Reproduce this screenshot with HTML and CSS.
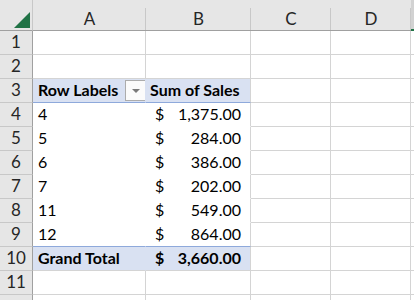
FILE: index.html
```html
<!DOCTYPE html>
<html>
	<head>
		<meta charset="utf-8">
		<title>Pivot</title>
		<link rel="stylesheet" href="styles.css">
	</head>
	<body>
		<div class="sheet">
			<!-- column headers -->
			<div class="corner"><span class="tri"></span></div>
			<div class="colhead">A</div>
			<div class="colhead">B</div>
			<div class="colhead">C</div>
			<div class="colhead">D</div>
			<div class="colhead sel"></div>

			<div class="rowhead">1</div>
			<div class="cell"></div><div class="cell"></div><div class="cell"></div><div class="cell"></div><div class="cell last"></div>

			<div class="rowhead">2</div>
			<div class="cell"></div><div class="cell"></div><div class="cell"></div><div class="cell"></div><div class="cell last"></div>

			<div class="rowhead">3</div>
			<div class="cell pvhead pvA">Row Labels<span class="drop"><span class="arrow"></span></span></div>
			<div class="cell pvhead pvB">Sum of Sales</div>
			<div class="cell"></div><div class="cell"></div><div class="cell last"></div>

			<div class="rowhead">4</div>
			<div class="cell pv pvA">4</div>
			<div class="cell pv pvB money"><span>$</span><span>1,375.00</span></div>
			<div class="cell"></div><div class="cell"></div><div class="cell last"></div>

			<div class="rowhead">5</div>
			<div class="cell pv pvA">5</div>
			<div class="cell pv pvB money"><span>$</span><span>284.00</span></div>
			<div class="cell"></div><div class="cell"></div><div class="cell last"></div>

			<div class="rowhead">6</div>
			<div class="cell pv pvA">6</div>
			<div class="cell pv pvB money"><span>$</span><span>386.00</span></div>
			<div class="cell"></div><div class="cell"></div><div class="cell last"></div>

			<div class="rowhead">7</div>
			<div class="cell pv pvA">7</div>
			<div class="cell pv pvB money"><span>$</span><span>202.00</span></div>
			<div class="cell"></div><div class="cell"></div><div class="cell last"></div>

			<div class="rowhead">8</div>
			<div class="cell pv pvA">11</div>
			<div class="cell pv pvB money"><span>$</span><span>549.00</span></div>
			<div class="cell"></div><div class="cell"></div><div class="cell last"></div>

			<div class="rowhead">9</div>
			<div class="cell pv pvA">12</div>
			<div class="cell pv pvB money"><span>$</span><span>864.00</span></div>
			<div class="cell"></div><div class="cell"></div><div class="cell last"></div>

			<div class="rowhead">10</div>
			<div class="cell pvtotal pvA">Grand Total</div>
			<div class="cell pvtotal pvB money"><span>$</span><span>3,660.00</span></div>
			<div class="cell"></div><div class="cell"></div><div class="cell last"></div>

			<div class="rowhead">11</div>
			<div class="cell"></div><div class="cell"></div><div class="cell"></div><div class="cell"></div><div class="cell last"></div>

			<div class="rowhead"></div>
			<div class="cell"></div><div class="cell"></div><div class="cell"></div><div class="cell"></div><div class="cell last"></div>
		</div>
	</body>
</html>
```

FILE: styles.css
```css
body{
	margin: 0;
	background: #fff;
	overflow: hidden;
	font-family: Lato, "Liberation Sans", sans-serif;
	color: #000;
}
.sheet{
	display: grid;
	grid-template-columns: 33px 113px 105px 80px 80px 1fr;
	grid-template-rows: 31px repeat(12, 24px);
	width: 414px;
	height: 300px;
	overflow: hidden;
}
.corner,.colhead{
	background: #e6e6e6;
	border-bottom: 1px solid #a0a0a0;
	position: relative;
}
.corner{border-right: 1px solid #c8c8c8;}
.tri{
	position: absolute;
	left: 14px;
	top: 12px;
	width: 0;
	height: 0;
	border-left: 16px solid transparent;
	border-bottom: 16px solid #217346;
}
.colhead{
	display: flex;
	align-items: center;
	justify-content: center;
	padding-top: 6px;
	font-size: 17px;
	color: #262626;
}
.colhead::after{
	content: "";
	position: absolute;
	right: 0;
	top: 8px;
	bottom: 0;
	width: 1px;
	background: #c8c8c8;
}
.colhead.sel{
	background: #d2d2d2;
	border-bottom: 2px solid #217346;
}
.colhead.sel::after{display: none;}
.rowhead{
	background: #e6e6e6;
	border-right: 1px solid #a0a0a0;
	border-bottom: 1px solid #c8c8c8;
	display: flex;
	align-items: flex-end;
	justify-content: center;
	padding-bottom: 2px;
	font-size: 17px;
	color: #262626;
}
.cell{
	border-right: 1px solid #d4d4d4;
	border-bottom: 1px solid #d4d4d4;
	display: flex;
	align-items: flex-end;
	padding: 0 4px 3px 5px;
	font-size: 16px;
	white-space: nowrap;
	overflow: hidden;
}
.cell.last{border-right: none;}
.pv{border-color: transparent;}
.pv.pvB{border-right-color: #d4d4d4;}
.pvhead,.pvtotal{
	background: #d9e1f2;
	font-weight: bold;
	border-right-color: #d9e1f2;
}
.pvhead{border-bottom: 1px solid #8ea9db;}
.pvtotal{border-top: 1px solid #8ea9db; margin-top: -1px;}
.pvhead.pvB,.pvtotal.pvB{border-right-color: #d4d4d4;}
.pvA{position: relative;}
.pvhead.pvB{padding-left: 4px;}
.money{
	justify-content: space-between;
	padding: 0 9px 3px 9px;
}
.drop{
	position: absolute;
	right: -1px;
	top: 1px;
	width: 19px;
	height: 19px;
	border: 1px solid #acacac;
	background: #fbfbfb;
	display: flex;
	align-items: center;
	justify-content: center;
}
.arrow{
	width: 0;
	height: 0;
	border-left: 4px solid transparent;
	border-right: 4px solid transparent;
	border-top: 4px solid #7a7a7a;
}
```
